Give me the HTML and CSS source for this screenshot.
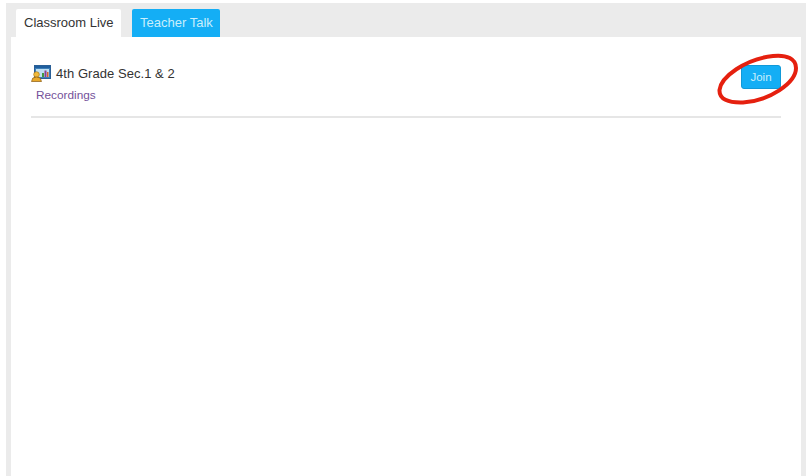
FILE: index.html
```html
<!DOCTYPE html>
<html lang="en">
<head>
<meta charset="utf-8">
<title>Classroom Live</title>
<link rel="stylesheet" href="styles.css">
</head>
<body>
<div class="frame">
  <nav class="tabs">
    <a class="tab tab-active">Classroom Live</a>
    <a class="tab tab-blue">Teacher Talk</a>
  </nav>
  <main class="panel">
    <section class="row">
      <div class="info">
        <div class="title">
          <svg class="class-icon" width="20" height="17" viewBox="0 0 20 17">
            <rect x="3.500" y="0.500" width="16" height="13" fill="#3f7fb8" stroke="#2a5f96"/>
            <rect x="4" y="1" width="15" height="2" fill="#1f5f9f"/>
            <rect x="5" y="4" width="13" height="8" fill="#bfe0f2"/>
            <rect x="11" y="8" width="2" height="4" fill="#3f9a3f"/>
            <rect x="13.500" y="5.500" width="2" height="6.500" fill="#8a3f8f"/>
            <rect x="16" y="7" width="1.500" height="5" fill="#d8642a"/>
            <circle cx="5.500" cy="9.500" r="2.800" fill="#f0b93a" stroke="#9a6a10" stroke-width="0.600"/>
            <path d="M0.500 16.500 L1.800 13 Q5.500 11 9.200 13 L10.500 16.500 Z" fill="#e9a92a" stroke="#8a5a10" stroke-width="0.700"/>
          </svg>
          <span class="title-text">4th Grade Sec.1 &amp; 2</span>
        </div>
        <a class="recordings">Recordings</a>
      </div>
      <div class="action">
        <button class="join">Join</button>
        <svg class="circle" width="84" height="56" viewBox="0 0 84 56">
          <path d="M2.500 39 C4 26 28 8 56 5 C70 3.500 79 8 79 17 C79 32 52 50 26 51.500 C11 52 2 48 2.500 39 Z" fill="none" stroke="#e5200f" stroke-width="4"/>
        </svg>
      </div>
    </section>
  </main>
</div>
</body>
</html>
```
FILE: styles.css
```css
html, body {
  margin: 0;
  padding: 0;
  height: 100%;
  background: #fff;
  overflow: hidden;
}
body {
  font-family: "Liberation Sans", Arial, sans-serif;
  font-weight: 400;
}
.frame {
  margin: 3px 1px 0 6px;
  height: 473px;
  background: #ebebeb;
  padding: 0 5px;
  display: flex;
  flex-direction: column;
}
.tabs {
  display: flex;
  gap: 11px;
  padding: 6px 0 0 5px;
  height: 28px;
}
.tab {
  height: 28px;
  line-height: 28px;
  font-size: 13px;
  padding: 0 7.500px 0 8px;
  border-radius: 2px 2px 0 0;
}
.tab-active {
  background: #fff;
  color: #333;
}
.tab-blue {
  background: #14aef5;
  color: #c9effc;
}
.panel {
  flex: 1;
  background: #fff;
  padding: 0 20px;
}
.row {
  display: flex;
  justify-content: space-between;
  height: 79px;
  border-bottom: 2px solid #e6e6e6;
}
.info {
  padding-top: 27px;
}
.title {
  display: flex;
  align-items: center;
  gap: 5px;
  font-size: 13px;
  color: #333;
  height: 18px;
}
.title-text {
  letter-spacing: 0.050px;
}
.recordings {
  display: block;
  margin: 6px 0 0 5px;
  font-size: 11.800px;
  color: #74519a;
}
.action {
  position: relative;
  padding-top: 28px;
}
.join {
  display: block;
  width: 40px;
  height: 24px;
  padding: 0;
  border: 1px solid #1199d8;
  border-radius: 3px;
  background: #14aef5;
  color: #c9effc;
  font: inherit;
  font-size: 11.500px;
}
.circle {
  position: absolute;
  left: -24px;
  top: 14px;
}
```
